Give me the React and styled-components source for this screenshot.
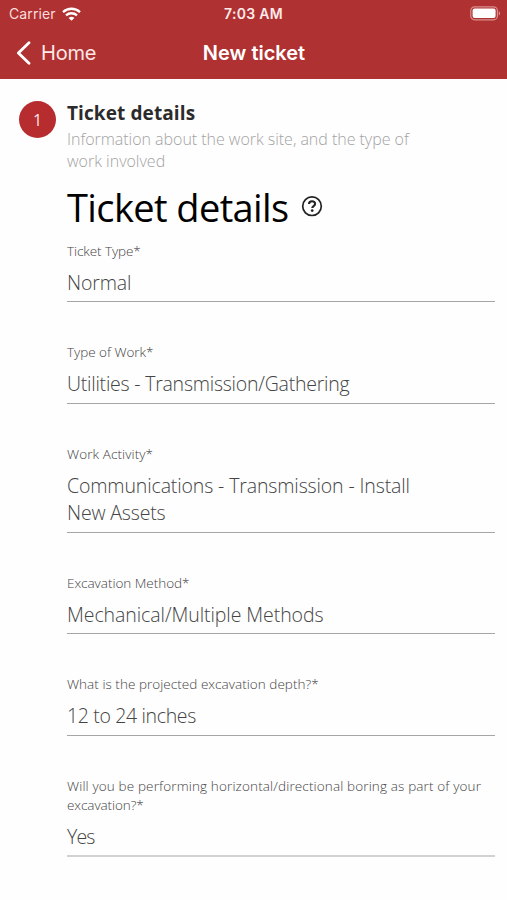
import React from "react";
import styled, { createGlobalStyle } from "styled-components";

const GlobalStyle = createGlobalStyle`
  * { box-sizing: border-box; }
  body { margin: 0; background: #fff; }
`;

const Screen = styled.div`
  width: 507px;
  height: 900px;
  overflow: hidden;
  background: #fefefe;
  font-family: "Open Sans", "Noto Sans", sans-serif;
`;

const Header = styled.header`
  height: 79px;
  background: #b03131;
  color: #fff;
  font-family: Inter, "Liberation Sans", sans-serif;
`;

const StatusBar = styled.div`
  display: grid;
  grid-template-columns: 1fr auto 1fr;
  align-items: center;
  height: 27px;
  padding: 0 6px;
`;

const Carrier = styled.div`
  display: flex;
  align-items: center;
  gap: 6px;
  padding-left: 3px;
  font-size: 14px;
  letter-spacing: 0.1px;
  color: #f9dddd;
`;

const Clock = styled.div`
  font-size: 14px;
  font-weight: 600;
  color: #fdeaea;
  letter-spacing: 0.3px;
`;

const BatterySlot = styled.div`
  display: flex;
  justify-content: flex-end;
`;

const NavBar = styled.nav`
  display: grid;
  grid-template-columns: 1fr auto 1fr;
  align-items: center;
  height: 51px;
  padding: 0 15px;
`;

const Back = styled.div`
  display: flex;
  align-items: center;
  gap: 10px;
  font-size: 20px;
  letter-spacing: -0.2px;
  color: #fde8e8;
`;

const NavTitle = styled.div`
  padding-left: 1px;
  font-size: 20px;
  font-weight: 600;
`;

const Content = styled.main`
  display: grid;
  grid-template-columns: 48px 1fr;
  padding: 22px 12px 0 19px;
`;

const StepBadge = styled.div`
  width: 37px;
  height: 37px;
  border-radius: 50%;
  background: #b62c2f;
  color: #f9e3e3;
  font-size: 16px;
  line-height: 38px;
  text-align: center;
`;

const Body = styled.div`
  min-width: 0;
`;

const Line = styled.span`
  display: block;
  width: max-content;
  white-space: nowrap;
  letter-spacing: ${(p) => p.$track || 0}px;
`;

const StepTitle = styled.div`
  height: 24px;
  font-size: 19px;
  line-height: 24px;
  font-weight: 700;
  color: #2b2b2b;
`;

const StepInfo = styled.div`
  padding-top: 3px;
  font-size: 16px;
  line-height: 22.4px;
  font-weight: 300;
  color: #a3a3a3;
`;

const Heading = styled.h1`
  display: flex;
  align-items: center;
  gap: 12.5px;
  height: 54px;
  margin: 7.2px 0 7.7px;
  font-size: 38px;
  line-height: 54px;
  font-weight: 400;
  color: #000;
`;

const Field = styled.div`
  margin-bottom: 41px;
  padding-bottom: 5px;
  border-bottom: ${(p) => (p.$thick ? "2px solid #d2d2d2" : "1px solid #a6a6a6")};
`;

const Label = styled.div`
  margin-bottom: 8px;
  font-size: 13.5px;
  line-height: 19px;
  font-weight: 300;
  color: #444;
`;

const Value = styled.div`
  font-size: 19.5px;
  line-height: 27.5px;
  font-weight: 300;
  color: #444;
`;

const WifiIcon = () => (
  <svg width="19" height="14" viewBox="0 0 19 14" fill="none" stroke="#fff" strokeWidth="2.3">
    <path d="M1 5.1C5.8.6 13.2.6 18 5.1" />
    <path d="M4 8.4c3.1-2.9 7.9-2.9 11 0" />
    <path d="M6.6 10.9c1.7-1.5 4.1-1.5 5.8 0L9.5 13.8z" fill="#fff" stroke="none" />
  </svg>
);

const BatteryIcon = () => (
  <svg width="31" height="15" viewBox="0 0 31 15">
    <rect x="0.8" y="0.8" width="26.6" height="13" rx="3.8" fill="none" stroke="#d78f8f" strokeWidth="1.2" />
    <rect x="2.6" y="2.6" width="23" height="9.4" rx="2" fill="#fff" />
    <path d="M28.8 5v4.6c1.8-.8 1.8-3.8 0-4.6z" fill="#d78f8f" />
  </svg>
);

const ChevronIcon = () => (
  <svg width="16" height="24" viewBox="0 0 16 24" fill="none" stroke="#fff" strokeWidth="2.8" strokeLinecap="round" strokeLinejoin="round">
    <path d="M14 1.8L3.4 12l10.6 10.2" />
  </svg>
);

const HelpIcon = () => (
  <svg width="22" height="22" viewBox="0 0.8 22 22" fill="none" stroke="#222">
    <circle cx="11" cy="11" r="9.3" strokeWidth="1.7" />
    <path d="M8 8.9c0-3.8 6.1-3.6 6.1-.3 0 2.3-2.9 2.2-2.9 4.3" strokeWidth="2.1" />
    <circle cx="11.2" cy="15.4" r="1.35" fill="#222" stroke="none" />
  </svg>
);

// Each line of text is paired with its letter spacing in pixels.
const fields = [
  { label: [["Ticket Type*", -0.08]], value: [["Normal", -0.15]] },
  { label: [["Type of Work*", -0.04]], value: [["Utilities - Transmission/Gathering", -0.23]] },
  { label: [["Work Activity*", 0.1]], value: [["Communications - Transmission - Install", -0.13], ["New Assets", -0.16]] },
  { label: [["Excavation Method*", -0.03]], value: [["Mechanical/Multiple Methods", -0.07]] },
  { label: [["What is the projected excavation depth?*", 0.04]], value: [["12 to 24 inches", -0.35]] },
  {
    label: [["Will you be performing horizontal/directional boring as part of your", 0.14], ["excavation?*", -0.08]],
    value: [["Yes", -0.9]],
    thick: true,
  },
];

const Lines = ({ items }) => items.map(([text, track]) => <Line key={text} $track={track}>{text}</Line>);

export default function App() {
  return (
    <Screen>
      <GlobalStyle />
      <Header>
        <StatusBar>
          <Carrier>Carrier <WifiIcon /></Carrier>
          <Clock>7:03 AM</Clock>
          <BatterySlot><BatteryIcon /></BatterySlot>
        </StatusBar>
        <NavBar>
          <Back><ChevronIcon />Home</Back>
          <NavTitle>New ticket</NavTitle>
        </NavBar>
      </Header>
      <Content>
        <StepBadge>1</StepBadge>
        <Body>
          <StepTitle><Line $track={0.1}>Ticket details</Line></StepTitle>
          <StepInfo>
            <Line $track={-0.03}>Information about the work site, and the type of</Line>
            <Line>work involved</Line>
          </StepInfo>
          <Heading><Line $track={-0.6}>Ticket details</Line><HelpIcon /></Heading>
          {fields.map((f) => (
            <Field key={f.label[0][0]} $thick={f.thick}>
              <Label><Lines items={f.label} /></Label>
              <Value><Lines items={f.value} /></Value>
            </Field>
          ))}
        </Body>
      </Content>
    </Screen>
  );
}
